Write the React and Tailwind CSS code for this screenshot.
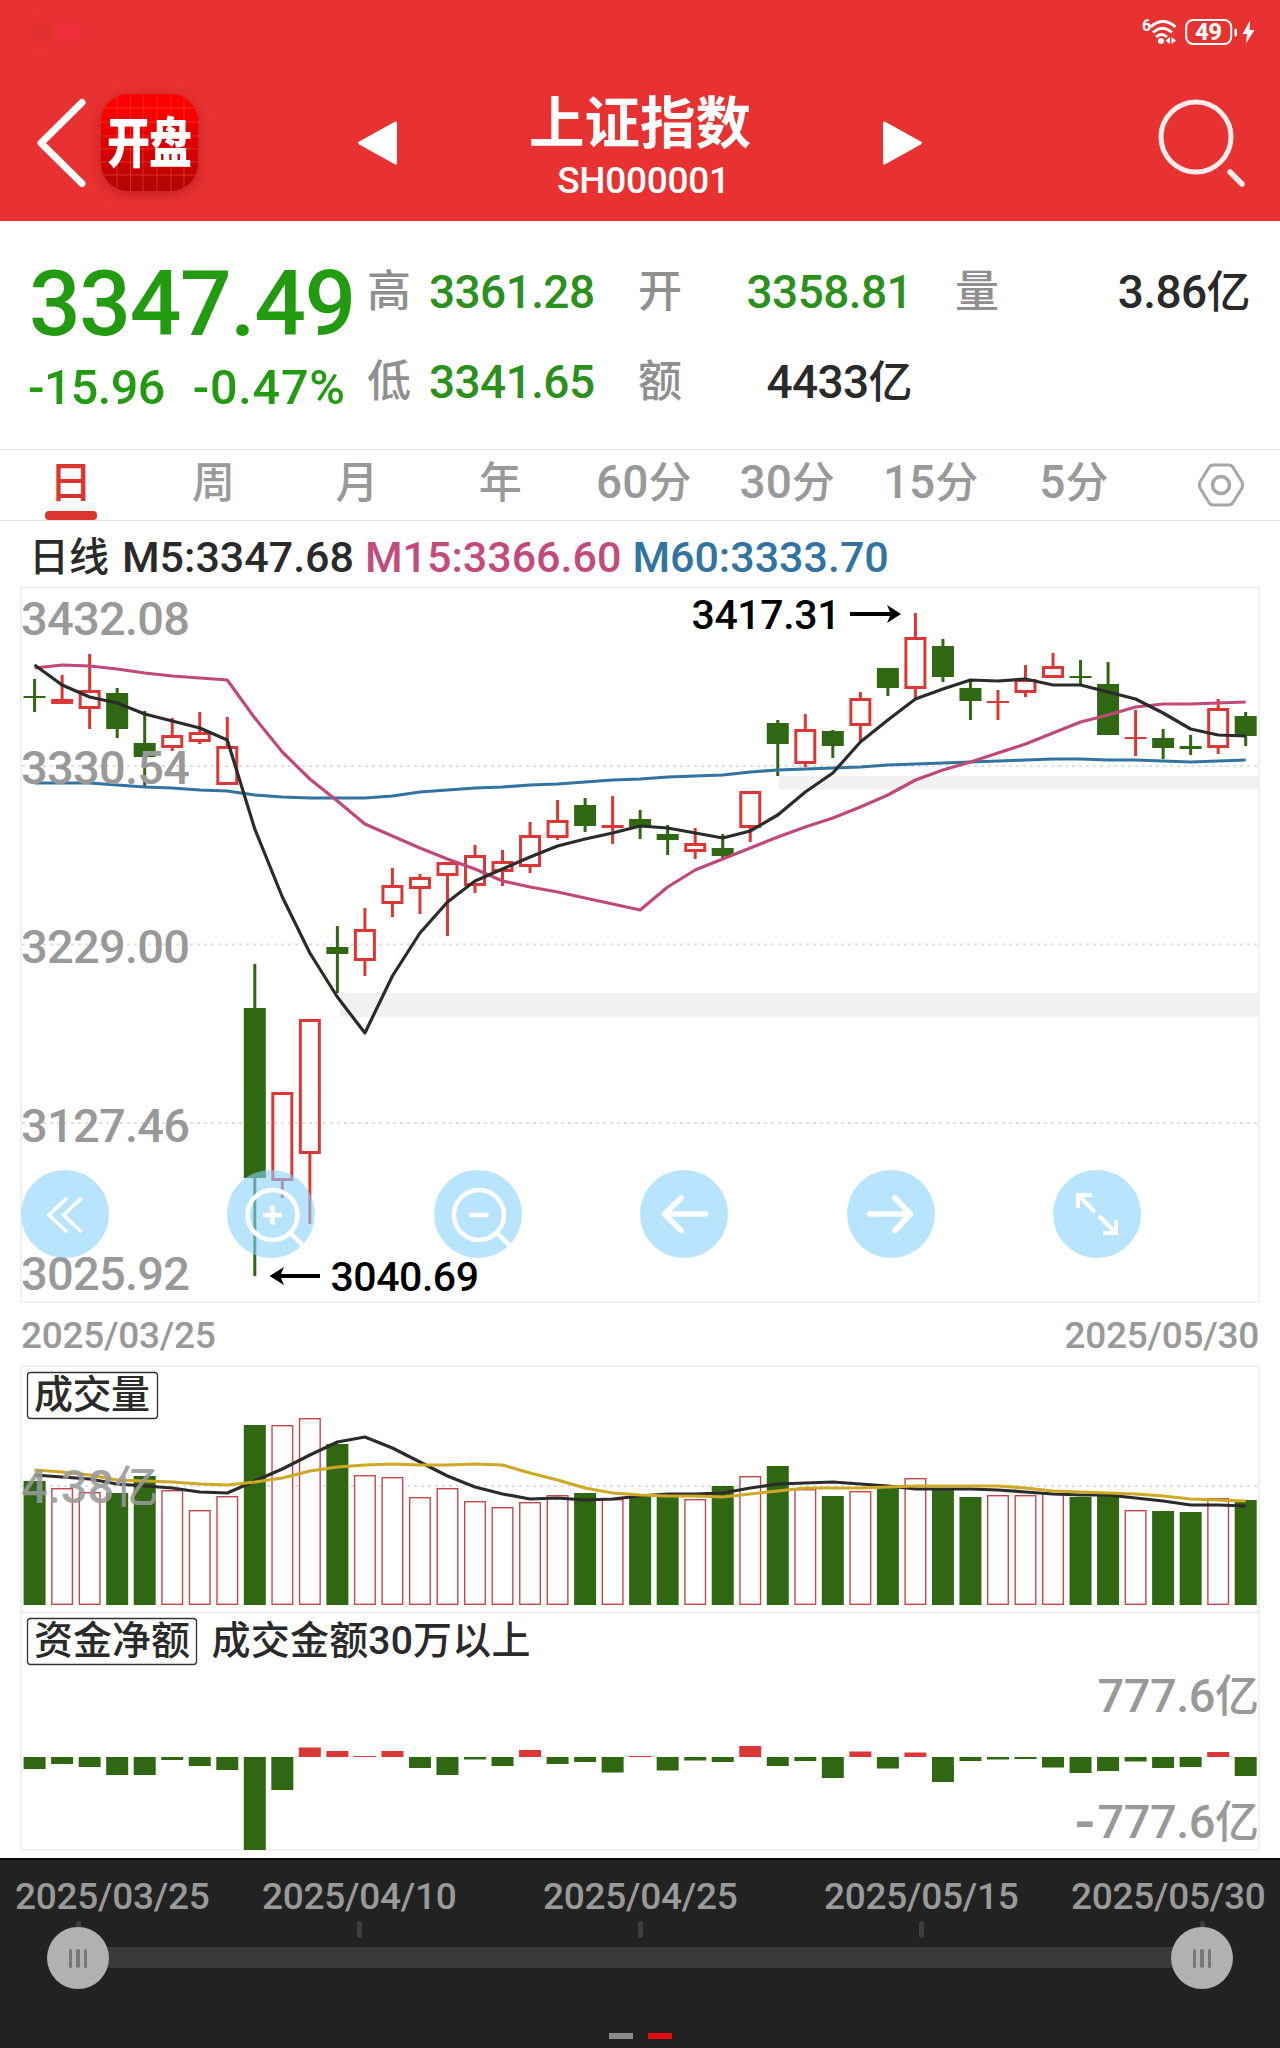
import React from 'react';

const RED = '#dc3737';
const GREEN = '#2f6713';
const GREY = '#999999';
const FONT = 'Roboto, "Noto Sans CJK SC", sans-serif';

// 每根K線的中心 x 座標
const STEP = 27.525;
const cx = (i) => 34.6 + i * STEP;

// [漲跌, 最高, 實體上緣, 實體下緣, 最低]
const CANDLES = [
  ['g', 679, 696, 698, 712], ['r', 675, 699, 704, 704], ['r', 654, 690, 709, 729],
  ['g', 688, 693, 729, 738], ['g', 711, 743, 757, 787], ['r', 718, 735, 748, 751],
  ['r', 712, 732, 742, 744], ['r', 717, 746, 785, 785], ['g', 964, 1008, 1178, 1276],
  ['r', 1092, 1092, 1181, 1198], ['r', 1019, 1019, 1154, 1224], ['g', 926, 947, 954, 993],
  ['r', 908, 929, 961, 976], ['r', 868, 885, 904, 917], ['r', 874, 877, 889, 914],
  ['r', 862, 862, 876, 936], ['r', 845, 855, 886, 893], ['r', 850, 861, 872, 886],
  ['r', 822, 835, 867, 873], ['r', 800, 820, 838, 840], ['g', 798, 805, 826, 832],
  ['r', 796, 825, 828, 844], ['g', 810, 819, 827, 839], ['g', 825, 834, 840, 855],
  ['r', 828, 843, 852, 859], ['g', 834, 848, 856, 858], ['r', 791, 791, 828, 842],
  ['g', 720, 723, 744, 776], ['r', 714, 729, 764, 767], ['g', 730, 731, 746, 758],
  ['r', 692, 698, 726, 741], ['g', 668, 668, 688, 696], ['r', 613, 637, 689, 698],
  ['g', 639, 646, 677, 682], ['g', 679, 688, 701, 720], ['r', 690, 701, 703, 720],
  ['r', 665, 679, 693, 697], ['r', 653, 666, 678, 678], ['g', 660, 676, 678, 684],
  ['g', 662, 684, 735, 735], ['r', 710, 737, 739, 756], ['g', 729, 738, 748, 759],
  ['g', 735, 746, 749, 755], ['r', 699, 708, 748, 754], ['g', 712, 716, 736, 746],
];

const MA5 = [665, 685, 697, 703, 714, 721, 728, 740, 829, 897, 953, 997, 1033, 976, 933, 902, 881, 869, 857, 846, 839, 833, 826, 828, 833, 838, 831, 815, 792, 773, 742, 720, 699, 689, 680, 681, 679, 685, 685, 692, 699, 713, 729, 735, 736];
const MA15 = [668, 665, 666, 669, 673, 676, 678, 680, 718, 752, 779, 801, 824, 836, 848, 859, 869, 881, 887, 892, 898, 904, 910, 887, 870, 859, 848, 837, 827, 818, 807, 795, 780, 770, 762, 753, 744, 733, 722, 715, 707, 704, 704, 703, 702];
const MA60 = [783, 783, 783, 785, 787, 788, 790, 791, 795, 797, 798, 798, 798, 796, 792, 790, 788, 787, 785, 784, 782, 780, 779, 777, 776, 775, 772, 770, 769, 768, 767, 765, 764, 763, 762, 761, 760, 759, 759, 760, 760, 761, 762, 761, 760];

const VOLUME_TOP = [1481, 1488, 1492, 1493, 1476, 1490, 1510, 1496, 1425, 1425, 1418, 1444, 1475, 1477, 1497, 1488, 1501, 1507, 1502, 1495, 1493, 1499, 1497, 1495, 1499, 1486, 1476, 1466, 1489, 1496, 1491, 1488, 1478, 1488, 1497, 1495, 1495, 1493, 1497, 1496, 1510, 1511, 1512, 1498, 1500];
const VOLUME_MA5 = [1475, 1477, 1479, 1484, 1486, 1488, 1492, 1493, 1481, 1469, 1455, 1442, 1437, 1448, 1462, 1476, 1487, 1494, 1499, 1498, 1500, 1499, 1496, 1494, 1494, 1493, 1488, 1484, 1483, 1482, 1484, 1486, 1489, 1489, 1489, 1490, 1492, 1494, 1495, 1495, 1498, 1501, 1505, 1505, 1506];
const VOLUME_MA10 = [1470, 1472, 1475, 1480, 1481, 1482, 1484, 1485, 1482, 1478, 1471, 1467, 1465, 1464, 1465, 1465, 1464, 1465, 1473, 1480, 1488, 1493, 1495, 1496, 1496, 1497, 1494, 1491, 1488, 1488, 1488, 1487, 1486, 1486, 1486, 1486, 1488, 1491, 1492, 1493, 1494, 1496, 1499, 1500, 1501];

// 資金淨額：負值為流出
const FUNDS = [-12, -7, -10, -18, -18, -3, -9, -13, -93, -33, 9.5, 6, 1, 6, -11, -18, -2.5, -9, 7, -7, -5, -15.5, 1, -13.5, -3.5, -5, 11, -9, -4, -21, 5.5, -11.5, 4.5, -25, -4, -2.5, -2, -10.5, -16, -14, -4.5, -11, -10, 5, -19];

const TABS = [['', '日'], ['', '周'], ['', '月'], ['', '年'], ['60', '分'], ['30', '分'], ['15', '分'], ['5', '分']];

const Line = ({ values, color }) => (
  <polyline
    points={values.map((y, i) => `${cx(i)},${y}`).join(' ')}
    fill="none"
    stroke={color}
    strokeWidth="3.200"
    strokeLinejoin="round"
  />
);

const Grid = ({ y }) => (
  <line x1="22" x2="1258" y1={y} y2={y} stroke="#e0e0e0" strokeWidth="2" strokeDasharray="3 4" />
);

const Label = ({ x, y, width, size = 47, color = GREY, children }) => (
  <text x={x} y={y} textLength={width} fontSize={size} fontWeight="500" fill={color} fontFamily={FONT}>
    {children}
  </text>
);

const Candle = ({ index, data }) => {
  const [type, high, top, bottom, low] = data;
  const x = cx(index);
  const color = type === 'g' ? GREEN : RED;
  const solid = type === 'g' || bottom - top < 6;
  return (
    <g>
      {top > high && <rect x={x - 1.5} y={high} width="3" height={top - high} fill={color} />}
      {low > bottom && <rect x={x - 1.5} y={bottom} width="3" height={low - bottom} fill={color} />}
      {solid ? (
        <rect x={x - 11} y={top} width="22" height={bottom - top} fill={color} />
      ) : (
        <rect x={x - 9.5} y={top + 1.5} width="19" height={bottom - top - 3} fill="none" stroke={color} strokeWidth="3" />
      )}
    </g>
  );
};

const StatusBar = () => (
  <div className="flex h-[64px] items-center justify-between pl-7 pr-[25px]">
    <div className="flex h-7 w-[60px] items-center gap-1 opacity-60 blur-[6px]">
      <span className="ml-2 h-4 w-4 rounded-full bg-[#cf302c]"></span>
      <span className="h-6 w-6 bg-[#f52c48]"></span>
    </div>
    <svg width="114" height="32" viewBox="1141 16 114 32">
      <text x="1142" y="31" fontSize="16" fontWeight="700" fill="#ffffff" fontFamily={FONT} textLength="8">6</text>
      <g fill="none" stroke="#ffffff" strokeWidth="3">
        <path d="M1150.500 27 Q1163 16 1175.500 27" />
        <path d="M1153 32.500 Q1162.500 24 1172 32.500" />
        <path d="M1156 37 Q1161.500 32 1167 37" />
      </g>
      <circle cx="1161" cy="41" r="3" fill="#ffffff" />
      <path d="M1170 37 V44 L1165.500 40.500 Z M1171.500 37 V44 L1176 40.500 Z" fill="#ffffff" />
      <rect x="1186.200" y="20" width="45" height="24" rx="7" fill="none" stroke="#ffffff" strokeWidth="2" />
      <text x="1195" y="40" fontSize="24" fontWeight="800" fill="#ffffff" fontFamily={FONT} textLength="27">49</text>
      <rect x="1234.500" y="28.500" width="2.500" height="8" rx="1.200" fill="#ffffff" />
      <path d="M1250 20.500 L1242.500 34 H1247 L1246 43.500 L1254.500 30 H1249.500 Z" fill="#ffffff" />
    </svg>
  </div>
);

const Logo = () => (
  <svg width="97" height="97" viewBox="0 0 97 97" className="rounded-[27px] shadow-[0_3px_12px_rgba(120,0,0,0.35)]">
    <defs>
      <linearGradient id="logoBg" x1="0" y1="0" x2="0" y2="1">
        <stop offset="0" stopColor="#ff0000" />
        <stop offset="0.2" stopColor="#f80000" />
        <stop offset="1" stopColor="#b00505" />
      </linearGradient>
    </defs>
    <rect width="97" height="97" fill="url(#logoBg)" />
    <path
      d="M16 0V97 M29.500 0V97 M42 0V97 M56 0V97 M70 0V97 M83 0V97 M0 14H97 M0 28H97 M0 42H97 M0 55H97 M0 68H97 M0 81H97"
      stroke="#ff6a4a"
      strokeOpacity="0.4"
      strokeWidth="1"
    />
    <text transform="translate(6 69) scale(1 1.260)" fontSize="43" fontWeight="900" fill="#ffffff" textLength="85" fontFamily='"Noto Sans CJK SC", sans-serif'>
      开盘
    </text>
  </svg>
);

const Header = () => (
  <header className="h-[221px] bg-[#e83131]">
    <StatusBar />
    <div className="flex h-[157px] items-start justify-between pl-[35px] pr-[35px] text-white">
      <div className="flex w-[400px] items-start pt-[30px]">
        <svg width="54" height="97" viewBox="36 94 54 97">
          <path d="M83 102.500 L42 143 L83 183.500" fill="none" stroke="#ffffff" strokeWidth="7" strokeLinecap="round" strokeLinejoin="round" />
        </svg>
        <div className="ml-[12px]">
          <Logo />
        </div>
        <svg width="41" height="48" viewBox="0 0 41 48" className="ml-[159px] mt-[25px]">
          <path d="M2.500 24 L38.500 4 V44 Z" fill="#ffffff" stroke="#ffffff" strokeWidth="3" strokeLinejoin="round" />
        </svg>
      </div>
      <div className="flex flex-col items-center pt-[29px]">
        <h1 className="text-[55.500px] font-bold leading-[64px]">上证指数</h1>
        <p className="pl-[7px] text-[37px] font-medium leading-[47px] tracking-[-0.300px]">SH000001</p>
      </div>
      <div className="flex w-[400px] items-start justify-between pt-[30px]">
        <svg width="41" height="48" viewBox="0 0 41 48" className="ml-[37px] mt-[25px]">
          <path d="M38.500 24 L2.500 4 V44 Z" fill="#ffffff" stroke="#ffffff" strokeWidth="3" strokeLinejoin="round" />
        </svg>
        <svg width="90" height="97" viewBox="1155 94 90 97">
          <circle cx="1196" cy="137" r="35" fill="none" stroke="#ffeceb" strokeWidth="5" />
          <path d="M1230 172 L1242 184" stroke="#ffeceb" strokeWidth="5.500" strokeLinecap="round" />
        </svg>
      </div>
    </div>
  </header>
);

const Quote = () => (
  <section className="flex h-[228px] font-medium">
    <div className="w-[367px] pl-[28px] pt-[33px] text-[#239b10]">
      <div className="pl-px text-[91px] leading-[100px] tracking-[-1.400px]">3347.49</div>
      <div className="flex gap-[28px] text-[48.500px] leading-[68px]">
        <span className="tracking-[-0.600px]">-15.96</span>
        <span className="tracking-[0.800px]">-0.47%</span>
      </div>
    </div>
    <div className="grid grid-cols-[62px_209px_77px_197px_43px_44px_251px] grid-rows-[90px_90px] items-center pt-[26px] text-[46px] tracking-[-0.600px] text-[#2a2a2a]">
      <span className="text-[44px] text-[#8f8f8f]">高</span>
      <span className="text-[#2b901c]">3361.28</span>
      <span className="text-[44px] text-[#8f8f8f]">开</span>
      <span className="text-right text-[#2b901c]">3358.81</span>
      <span></span>
      <span className="text-[44px] text-[#8f8f8f]">量</span>
      <span className="text-right">3.86<span className="text-[44px]">亿</span></span>
      <span className="text-[44px] text-[#8f8f8f]">低</span>
      <span className="text-[#2b901c]">3341.65</span>
      <span className="text-[44px] text-[#8f8f8f]">额</span>
      <span className="text-right">4433<span className="text-[44px]">亿</span></span>
    </div>
  </section>
);

const Tabs = () => (
  <nav className="flex h-[72px] items-center border-y border-[#e2e2e2]">
    {TABS.map(([num, unit], i) => (
      <div
        key={num + unit}
        className={
          i === 0
            ? 'relative flex h-full w-[143.400px] justify-center pr-[2px] font-medium text-[#dc3530]'
            : 'flex h-full w-[143.400px] justify-center pr-[3px] font-medium text-[#999999]'
        }
      >
        <span className="text-[46px] leading-[65px]">
          {num}
          <span className="text-[43px]">{unit}</span>
        </span>
        {i === 0 && <span className="absolute bottom-0 h-[9px] w-[52px] rounded-[4px] bg-[#dc3530]"></span>}
      </div>
    ))}
    <svg width="50" height="48" viewBox="0 0 50 48" className="ml-[49px]" fill="none" stroke="#a6a6a6">
      <path d="M17 4 H33 Q35.500 4 37 6.500 L46 21 Q47.500 24 46 27 L37 41.500 Q35.500 44 33 44 H17 Q14.500 44 13 41.500 L4 27 Q2.500 24 4 21 L13 6.500 Q14.500 4 17 4 Z" strokeWidth="3" />
      <circle cx="25" cy="24" r="8.500" strokeWidth="3.500" />
    </svg>
  </nav>
);

const BUTTONS = [
  <path d="M46 28 L28 45 L46 62 M60.500 28 L42.500 45 L60.500 62" strokeWidth="3.500" />,
  <g strokeWidth="4.500">
    <circle cx="45.500" cy="45" r="25" />
    <path d="M36 45 H55 M45.500 35.500 V54.500" />
    <path d="M63.500 63 L76 75.500" />
  </g>,
  <g strokeWidth="4.500">
    <circle cx="45" cy="45" r="25" />
    <path d="M35.500 45 H54.500" />
    <path d="M63 63 L75.500 75.500" />
  </g>,
  <path d="M65.500 44 H24.500 M41 28 L24.500 44 L41 60.500" strokeWidth="5.500" strokeLinecap="round" strokeLinejoin="round" />,
  <path d="M22.500 44 H63.500 M48 28 L63.500 44 L48 60.500" strokeWidth="5.500" strokeLinecap="round" strokeLinejoin="round" />,
  <path d="M42 42 L25 25 M25 38 V25 H39 M46 46 L63 63 M50 63 H63 V50" strokeWidth="4" />,
];

const PriceChart = () => (
  <section className="relative h-[716px]">
    <svg width="1280" height="716" viewBox="0 587 1280 716" className="block">
      <rect x="779" y="776" width="479" height="13" fill="#f1f1f1" />
      <rect x="340" y="993" width="918" height="24" fill="#f1f1f1" />
      <Grid y={766} />
      <Grid y={944.5} />
      <Grid y={1123} />
      <rect x="21" y="587.500" width="1238" height="714.500" fill="none" stroke="#ebebeb" strokeWidth="1.500" />
      {CANDLES.map((c, i) => <Candle key={i} index={i} data={c} />)}
      <Line values={MA60} color="#31749f" />
      <Line values={MA15} color="#c0487a" />
      <Line values={MA5} color="#2b2b2b" />
      <Label x={21} y={635} width={169}>3432.08</Label>
      <Label x={21} y={784} width={169}>3330.54</Label>
      <Label x={21} y={962.5} width={169}>3229.00</Label>
      <Label x={21} y={1142} width={169}>3127.46</Label>
      <Label x={21} y={1290} width={169}>3025.92</Label>
      <Label x={691.5} y={629} width={149} size={41} color="#000000">3417.31</Label>
      <Label x={330.5} y={1291} width={148.5} size={41} color="#000000">3040.69</Label>
      <g fill="#000000">
        <path d="M850 612 H890 L887 605 L901 614 L887 623 L890 616 H850 Z" />
        <path d="M320 1274 H281 L284 1267 L269.500 1276 L284 1285 L281 1278 H320 Z" />
      </g>
    </svg>
    <div className="absolute left-[21px] top-[583px] flex gap-[118.400px]">
      {BUTTONS.map((icon, i) => (
        <button key={i} className="h-[88px] w-[88px] shrink-0 rounded-full bg-[#8ad2fd]/60">
          <svg width="88" height="88" viewBox="0 0 88 88" fill="none" stroke="#ffffff">{icon}</svg>
        </button>
      ))}
    </div>
  </section>
);

const VolumeChart = () => (
  <svg width="1280" height="247" viewBox="0 1365 1280 247" className="block">
    <Grid y={1486} />
    <path d="M21 1612 V1366 H1259 V1612" fill="none" stroke="#ebebeb" strokeWidth="1.500" />
    {VOLUME_TOP.map((y, i) =>
      CANDLES[i][0] === 'g' ? (
        <rect key={i} x={cx(i) - 11} y={y} width="22" height={1605 - y} fill={GREEN} />
      ) : (
        <rect key={i} x={cx(i) - 10.3} y={y + 0.7} width="20.600" height={1603.6 - y} fill="#ffffff" stroke="#c4474b" strokeWidth="1.400" />
      )
    )}
    <Line values={VOLUME_MA5} color="#2b2b2b" />
    <Line values={VOLUME_MA10} color="#cfa925" />
    <text x="21" y="1503" fontSize="47" fontWeight="500" fill={GREY} fillOpacity="0.900" fontFamily={FONT}>
      4.38<tspan fontSize="44">亿</tspan>
    </text>
    <rect x="27.500" y="1372.500" width="130" height="46" rx="3" fill="none" stroke="#333333" strokeWidth="1.300" />
    <Label x={34} y={1408} width={116} size={39} color="#2a2a2a">成交量</Label>
  </svg>
);

const FundsChart = () => (
  <svg width="1280" height="246" viewBox="0 1612 1280 246" className="block">
    <rect x="21" y="1612.500" width="1238" height="237.500" fill="none" stroke="#ebebeb" strokeWidth="1.500" />
    {FUNDS.map((v, i) => (
      <rect key={i} x={cx(i) - 11} y={v > 0 ? 1757 - v : 1757} width="22" height={Math.abs(v)} fill={v > 0 ? RED : GREEN} />
    ))}
    <rect x="27.500" y="1618.500" width="169" height="46" rx="3" fill="none" stroke="#333333" strokeWidth="1.300" />
    <Label x={34} y={1653.5} width={156} size={39} color="#2a2a2a">资金净额</Label>
    <Label x={211.5} y={1653.5} width={319} size={39} color="#2a2a2a">成交金额30万以上</Label>
    <text x="1258.500" y="1712" textAnchor="end" fontSize="47" fontWeight="500" letterSpacing="-0.500" fill={GREY} fontFamily={FONT}>
      777.6<tspan fontSize="44">亿</tspan>
    </text>
    <text x="1258.500" y="1838" textAnchor="end" fontSize="47" fontWeight="500" letterSpacing="-0.500" fill={GREY} fontFamily={FONT}>
      <tspan fontSize="60" dy="4">-</tspan><tspan dy="-4" dx="3">777.6</tspan><tspan fontSize="44">亿</tspan>
    </text>
  </svg>
);

const Handle = ({ className }) => (
  <span className={`absolute top-[-20px] flex h-[62px] w-[62px] items-center justify-center gap-[4px] rounded-full bg-[#b1b1b1] ${className}`}>
    <span className="h-[19px] w-[3.500px] rounded-full bg-[#777777]"></span>
    <span className="h-[19px] w-[3.500px] rounded-full bg-[#777777]"></span>
    <span className="h-[19px] w-[3.500px] rounded-full bg-[#777777]"></span>
  </span>
);

const RangeBar = () => (
  <footer className="h-[190px] overflow-hidden border-t-2 border-[#0c0c0c] bg-[#222222]">
    <div className="flex pl-[15px] pt-[13px] text-[37px] font-medium leading-[48px] tracking-[-0.250px] text-[#9a9a9a]">
      <span className="w-[194px]">2025/03/25</span>
      <span className="ml-[53px] w-[194px]">2025/04/10</span>
      <span className="ml-[87px] w-[194px]">2025/04/25</span>
      <span className="ml-[87px] w-[194px]">2025/05/15</span>
      <span className="ml-[53px] w-[194px]">2025/05/30</span>
    </div>
    <div className="mx-[75.500px] flex justify-between">
      {[0, 1, 2, 3, 4].map((n) => (
        <span key={n} className="h-[17px] w-[5px] rounded-full bg-[#3e3e3e]"></span>
      ))}
    </div>
    <div className="relative mx-[78px] mt-[9px] h-[21px] bg-[#3a3a3a]">
      <Handle className="-left-[31px]" />
      <Handle className="-right-[31px]" />
    </div>
    <div className="mt-[65px] flex justify-center gap-[15px]">
      <span className="h-[6px] w-6 bg-[#8b8b8b]"></span>
      <span className="h-[6px] w-6 bg-[#e30b0b]"></span>
    </div>
  </footer>
);

const App = () => {
  return (
    <div className="h-[2048px] w-[1280px] overflow-hidden bg-white font-[Roboto,'Noto_Sans_CJK_SC',sans-serif]">
      <Header />
      <Quote />
      <Tabs />
      <div className="flex h-[66px] items-center gap-[11px] pl-[29px] pt-[7px] text-[43px] font-medium leading-[59px]">
        <span className="pr-[2px] text-[40px] text-[#2a2a2a]">日线</span>
        <span className="text-[#2a2a2a]">M5:3347.68</span>
        <span className="text-[#c44a7c]">M15:3366.60</span>
        <span className="text-[#31749f]">M60:3333.70</span>
      </div>
      <PriceChart />
      <div className="flex h-[62px] items-center justify-between px-[21px] pt-[3px] text-[37px] font-medium leading-[56px] tracking-[-0.250px] text-[#999999]">
        <span>2025/03/25</span>
        <span>2025/05/30</span>
      </div>
      <VolumeChart />
      <FundsChart />
      <RangeBar />
    </div>
  );
};

export default App;
